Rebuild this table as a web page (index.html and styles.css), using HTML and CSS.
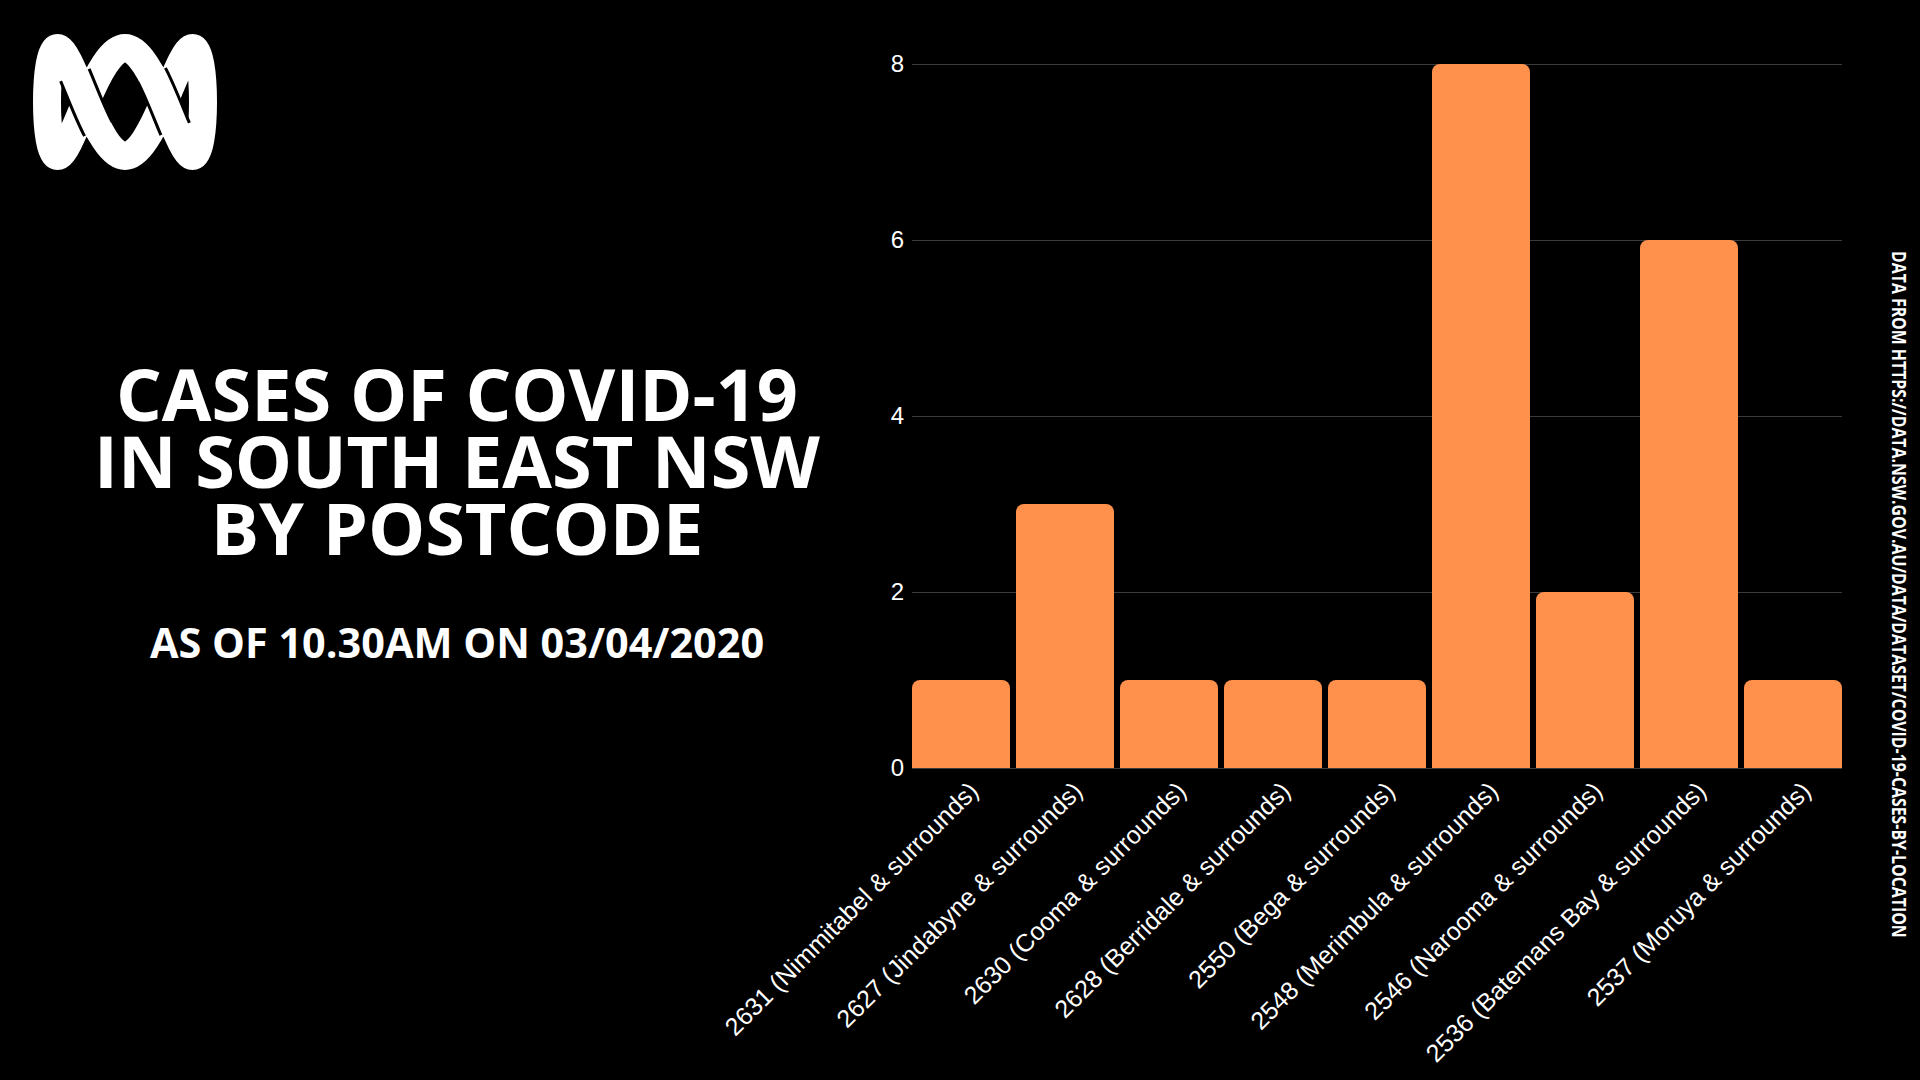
FILE: index.html
```html
<!DOCTYPE html>
<html lang="en">
<head>
<meta charset="utf-8">
<title>Cases of COVID-19 in South East NSW by postcode</title>
<link rel="stylesheet" href="styles.css">
</head>
<body>
<main class="page">
  <section class="intro">
    <svg class="logo" viewBox="0 0 184 136" width="184" height="136" aria-label="ABC">
      <path class="logo-curve" d="M92,14 C105.6,14 119.21,39.73 131,68 C142.79,96.27 152.74,122 159.55,122 C166.36,122 170,96.27 170,68 C170,39.73 166.36,14 159.55,14 C152.74,14 142.79,39.73 131,68 C119.21,96.27 105.6,122 92,122 C78.4,122 64.79,96.27 53,68 C41.21,39.73 31.26,14 24.45,14 C17.64,14 14,39.73 14,68 C14,96.27 17.64,122 24.45,122 C31.26,122 41.21,96.27 53,68 C64.79,39.73 78.4,14 92,14 Z"/>
      <path class="logo-gap" d="M65.32,95 C56.79,78.67 48.81,57.33 41.86,41"/>
      <path class="logo-over" d="M65.32,95 C56.79,78.67 48.81,57.33 41.86,41"/>
      <path class="logo-gap" d="M118.68,41 C127.21,57.33 135.19,78.67 142.14,95"/>
      <path class="logo-over" d="M118.68,41 C127.21,57.33 135.19,78.67 142.14,95"/>
    </svg>
    <h1 class="title">CASES OF COVID-19<br>IN SOUTH EAST NSW<br>BY POSTCODE</h1>
    <p class="subtitle">AS OF 10.30AM ON 03/04/2020</p>
  </section>

  <section class="chart">
    <div class="y-axis">
      <span>8</span><span>6</span><span>4</span><span>2</span><span>0</span>
    </div>
    <div class="plot">
      <div class="bar" style="height:88px"></div>
      <div class="bar" style="height:264px"></div>
      <div class="bar" style="height:88px"></div>
      <div class="bar" style="height:88px"></div>
      <div class="bar" style="height:88px"></div>
      <div class="bar" style="height:704px"></div>
      <div class="bar" style="height:176px"></div>
      <div class="bar" style="height:528px"></div>
      <div class="bar" style="height:88px"></div>
    </div>
    <div class="x-axis">
      <div class="tick"><span>2631 (Nimmitabel &amp; surrounds)</span></div>
      <div class="tick"><span>2627 (Jindabyne &amp; surrounds)</span></div>
      <div class="tick"><span>2630 (Cooma &amp; surrounds)</span></div>
      <div class="tick"><span>2628 (Berridale &amp; surrounds)</span></div>
      <div class="tick"><span>2550 (Bega &amp; surrounds)</span></div>
      <div class="tick"><span>2548 (Merimbula &amp; surrounds)</span></div>
      <div class="tick"><span>2546 (Narooma &amp; surrounds)</span></div>
      <div class="tick"><span>2536 (Batemans Bay &amp; surrounds)</span></div>
      <div class="tick"><span>2537 (Moruya &amp; surrounds)</span></div>
    </div>
  </section>

  <aside class="source">DATA FROM HTTPS://DATA.NSW.GOV.AU/DATA/DATASET/COVID-19-CASES-BY-LOCATION</aside>
</main>
</body>
</html>
```

FILE: styles.css
```css
html, body {
  margin: 0;
  padding: 0;
  background: #000;
}

body {
  font-family: "Open Sans", "Liberation Sans", sans-serif;
  color: #fff;
}

.page {
  display: flex;
  width: 1920px;
  height: 1080px;
  overflow: hidden;
  background: #000;
}

/* ---------- left intro ---------- */
.intro {
  flex: 0 0 864px;
  display: flex;
  flex-direction: column;
}

.logo {
  display: block;
  width: 184px;
  height: 136px;
  margin: 34px 0 0 33px;
}

.logo-curve {
  fill: none;
  stroke: #fff;
  stroke-width: 28;
}

.logo-gap {
  fill: none;
  stroke: #000;
  stroke-width: 34;
  stroke-linecap: butt;
}

.logo-over {
  fill: none;
  stroke: #fff;
  stroke-width: 28;
  stroke-linecap: round;
}

.title {
  margin: 190px 0 0;
  padding-left: 50px;
  text-align: center;
  font-family: "Open Sans", sans-serif;
  font-weight: 700;
  font-size: 72px;
  line-height: 67px;
  color: #fff;
}

.subtitle {
  margin: 53px 0 0;
  padding-left: 50px;
  text-align: center;
  font-family: "Open Sans", sans-serif;
  font-weight: 700;
  font-size: 41.4px;
  line-height: 57px;
  color: #fff;
}

/* ---------- chart ---------- */
.chart {
  flex: 0 0 978px;
  display: grid;
  grid-template-columns: 40px 930px;
  grid-template-rows: 705px auto;
  column-gap: 8px;
  align-content: start;
  padding-top: 64px;
}

.y-axis {
  grid-column: 1;
  grid-row: 1;
  display: flex;
  flex-direction: column;
  justify-content: space-between;
  align-items: flex-end;
  margin: -12px 0 -11px;
  font-family: "Liberation Sans", Arial, sans-serif;
  font-size: 24px;
  line-height: 24px;
  color: #fff;
}

.plot {
  grid-column: 2;
  grid-row: 1;
  display: flex;
  align-items: flex-end;
  gap: 6px;
  padding-bottom: 1px;
  background-image: repeating-linear-gradient(to bottom, #3c3c3c 0, #3c3c3c 1px, transparent 1px, transparent 176px);
}

.bar {
  flex: 0 0 98px;
  background: #ff914d;
  border-radius: 8px 8px 0 0;
}

.x-axis {
  grid-column: 2;
  grid-row: 2;
  display: flex;
  gap: 6px;
  padding-top: 3px;
}

.tick {
  flex: 0 0 98px;
  min-width: 0;
  display: flex;
  justify-content: flex-end;
  padding-right: 36px;
  box-sizing: border-box;
}

.tick span {
  flex: none;
  white-space: nowrap;
  font-family: "Liberation Sans", Arial, sans-serif;
  font-size: 25px;
  color: #fff;
  transform: rotate(-45deg);
  transform-origin: 100% 50%;
}

/* ---------- source note ---------- */
.source {
  flex: none;
  align-self: flex-start;
  margin: 251px 0 0 47px;
  writing-mode: vertical-rl;
  white-space: nowrap;
  font-family: "Open Sans", sans-serif;
  font-weight: 700;
  font-size: 19px;
  line-height: 19px;
  color: #fff;
  transform: scaleY(0.835);
  transform-origin: top;
}
```
